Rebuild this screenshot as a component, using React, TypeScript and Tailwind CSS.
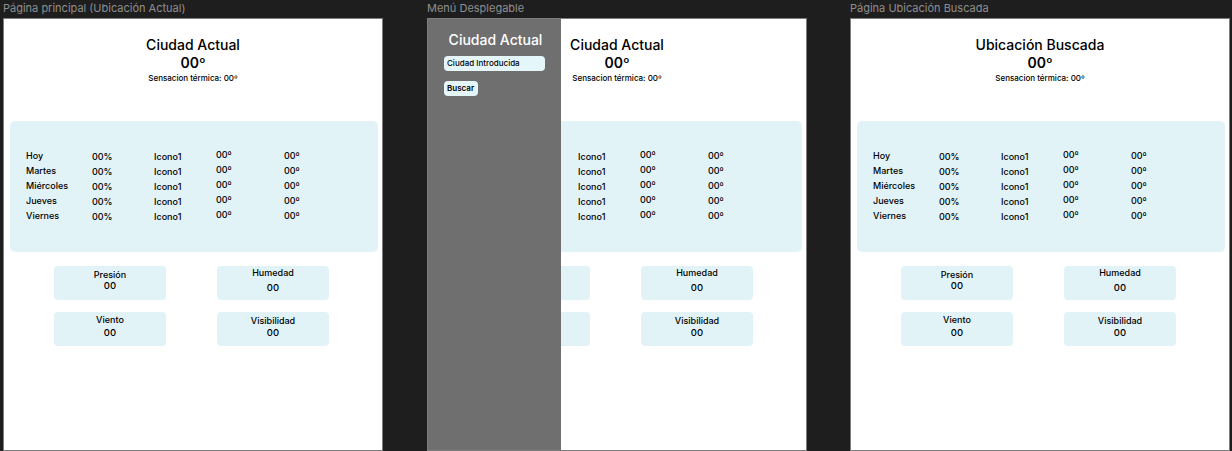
import React from 'react'

// ─── Data ───────────────────────────────────────────
const DAYS = ['Hoy', 'Martes', 'Miércoles', 'Jueves', 'Viernes']

const CARDS = [
    { label: 'Presión', value: '00', pad: 'pt-[3px]', gap: 'mt-0' },
    { label: 'Humedad', value: '00', pad: 'pt-[1px]', gap: 'mt-[4px]' },
    { label: 'Viento', value: '00', pad: 'pt-[2px]', gap: 'mt-[2px]' },
    { label: 'Visibilidad', value: '00', pad: 'pt-[3px]', gap: 'mt-px' },
]

// ─── Pieces ─────────────────────────────────────────
function Header({ title }: { title: string }) {
    return (
        <div className="flex flex-col items-center pt-[17px] text-black">
            <p className="text-[14px] leading-[17px] font-medium">{title}</p>
            <p className="mt-px text-[14px] leading-[17px] font-semibold">00º</p>
            <p className="mt-[2px] text-[8px] leading-[10px] font-medium">Sensacion térmica: 00º</p>
        </div>
    )
}

function Forecast() {
    return (
        <div className="mt-[38px] ml-[6px] w-[368px] h-[131px] rounded-[5px] bg-[#e2f3f8] pt-[27px] pl-[16px] text-[9px] leading-[15px] font-medium text-black">
            {DAYS.map(day => (
                <div key={day} className="flex h-[15px]">
                    <span className="w-[66px]">{day}</span>
                    <span className="w-[62px] translate-y-[1px]">00%</span>
                    <span className="w-[62px] translate-y-[1px]">Icono1</span>
                    <span className="w-[68px] -translate-y-[1px]">00º</span>
                    <span>00º</span>
                </div>
            ))}
        </div>
    )
}

function Cards() {
    return (
        <div className="mt-[14px] ml-[50px] grid grid-cols-[112px_112px] gap-x-[51px] gap-y-[12px]">
            {CARDS.map(c => (
                <div key={c.label} className={`h-[34px] rounded-[4px] bg-[#e2f3f8] flex flex-col items-center text-black font-medium ${c.pad}`}>
                    <span className="text-[9px] leading-[11px]">{c.label}</span>
                    <span className={`text-[9.5px] leading-[12px] ${c.gap}`}>{c.value}</span>
                </div>
            ))}
        </div>
    )
}

function Frame({ label, title, menu, className }: { label: string; title: string; menu?: boolean; className?: string }) {
    return (
        <div className={`flex flex-col ${className ?? ''}`}>
            <p className="h-[18px] text-[11px] leading-[18px] text-[#8e8e8e] -translate-y-[1px]">{label}</p>
            <div className="relative w-[380px] h-[433px] bg-white border border-[#7d7d7d] overflow-hidden">
                <Header title={title} />
                <Forecast />
                <Cards />

                {/* Side menu overlay */}
                {menu && (
                    <div className="absolute inset-y-0 left-0 w-[133px] bg-[#6f6f6f] flex flex-col items-start px-[16px] pt-[12px]">
                        <p className="self-center pl-[2px] text-[14px] leading-[17px] font-medium text-white">Ciudad Actual</p>
                        <div className="mt-[8px] w-[101px] h-[15px] rounded-[4px] bg-[#e5f6fa] pl-[3px] text-[8px] leading-[15px] font-medium text-black">
                            Ciudad Introducida
                        </div>
                        <button className="mt-[10px] w-[34px] h-[15px] rounded-[4px] bg-[#e5f6fa] pl-[3px] text-left text-[8px] leading-[15px] font-semibold text-black">
                            Buscar
                        </button>
                    </div>
                )}
            </div>
        </div>
    )
}

// ─── App ────────────────────────────────────────────
export default function App() {
    return (
        <div className="w-[1232px] h-[451px] overflow-hidden bg-[#1e1e1e] font-['Inter',sans-serif] flex pl-[3px]">
            <Frame label="Página principal (Ubicación Actual)" title="Ciudad Actual" />
            <Frame label="Menú Desplegable" title="Ciudad Actual" menu className="ml-[44px]" />
            <Frame label="Página Ubicación Buscada" title="Ubicación Buscada" className="ml-[43px]" />
        </div>
    )
}
